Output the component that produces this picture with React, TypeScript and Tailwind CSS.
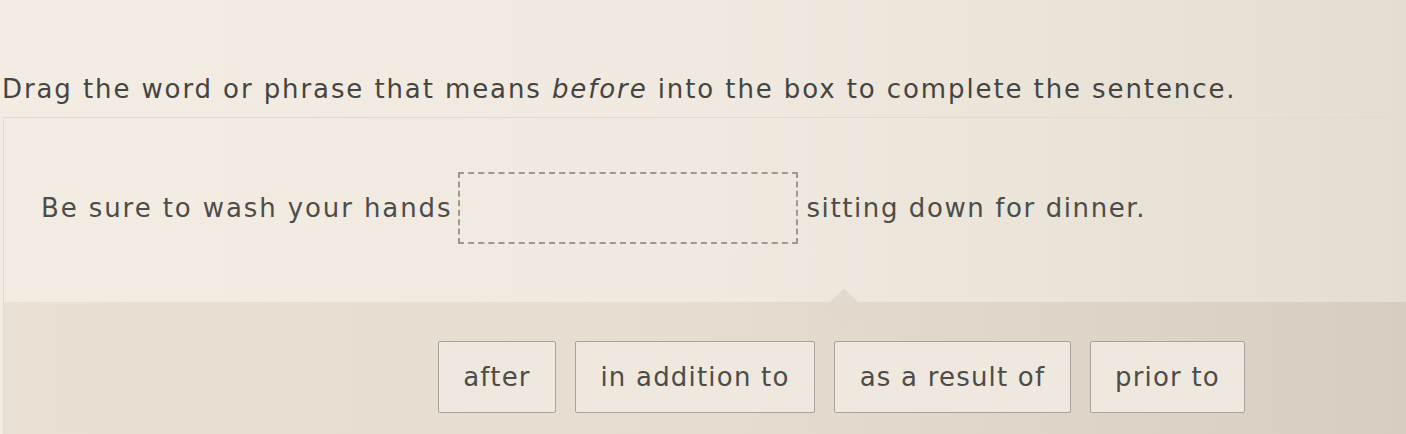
const chips = [
  { label: "after", w: "w-[118px]" },
  { label: "in addition to", w: "w-[240px]" },
  { label: "as a result of", w: "w-[237px]" },
  { label: "prior to", w: "w-[155px]" },
]

export default function App() {
  return (
    <div
      className="w-[1406px] h-[434px] overflow-hidden bg-gradient-to-r from-[#f2ece3] via-[#efe9df] to-[#e4ded2] text-[#4d4c49]"
      style={{ fontFamily: "'DejaVu Sans', Verdana, sans-serif" }}
    >
      <div className="h-[117px] pt-[71px] pl-[2px]">
        <p className="text-[26px] leading-[36px] tracking-[1.9px] whitespace-nowrap text-[#454441]">
          Drag the word or phrase that means <em>before</em> into the box to complete the sentence.
        </p>
      </div>

      <div className="ml-[3px] border-l border-t border-[#e1dace]">
        <div className="h-[184px] flex items-center pb-[4px] pl-[37px] text-[26px] whitespace-nowrap">
          <span className="tracking-[1.9px]">Be sure to wash your hands</span>
          <div className="ml-[6px] mr-[8px] w-[340px] h-[72px] border-2 border-dashed border-[#9d9890]" />
          <span className="tracking-[1.6px]">sitting down for dinner.</span>
        </div>

        <div className="relative h-[132px] flex items-start pt-[39px] pl-[434px] gap-[19px] bg-gradient-to-r from-[#e8e1d3] via-[#e4ddd0] to-[#d5cec1]">
          <div className="absolute left-[826px] -top-[8px] w-[28px] h-[28px] rotate-45 bg-[#e0d9cc]" />
          {chips.map((chip) => (
            <div
              key={chip.label}
              className={`${chip.w} relative h-[72px] flex items-center justify-center border border-[#a9a49b] rounded-[2px] bg-[#eee8de] text-[26px] tracking-[1.2px] whitespace-nowrap`}
            >
              {chip.label}
            </div>
          ))}
        </div>
      </div>
    </div>
  )
}
